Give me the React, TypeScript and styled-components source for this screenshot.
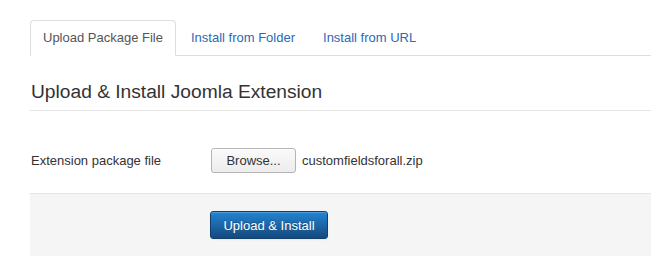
import styled, { createGlobalStyle } from 'styled-components'

const GlobalStyle = createGlobalStyle`
  html, body {
    margin: 0;
    padding: 0;
    background: #fff;
  }
  body {
    font-family: "Liberation Sans", Arial, Helvetica, sans-serif;
    font-size: 13px;
    line-height: 18px;
    color: #333;
  }
`;

const Page = styled.div`
  padding: 20px 0 0 30px;
`;

const Tabs = styled.ul`
  display: flex;
  list-style: none;
  margin: 0 0 18px;
  padding: 0;
  border-bottom: 1px solid #ddd;
`;

const Tab = styled.li<{ $active?: boolean }>`
  margin: 0 2px -1px 0;
  padding: 8px 12px;
  line-height: 18px;
  border: 1px solid ${(p) => (p.$active ? '#ddd' : 'transparent')};
  border-bottom-color: transparent;
  border-radius: 4px 4px 0 0;
  background: ${(p) => (p.$active ? '#fff' : 'transparent')};
  color: ${(p) => (p.$active ? '#555' : '#2a69b8')};
  cursor: pointer;
`;

const Legend = styled.div`
  font-size: 19.2px;
  line-height: 36px;
  color: #333;
  padding-left: 1px;
  border-bottom: 1px solid #e5e5e5;
  margin-bottom: 37px;
`;

const ControlGroup = styled.div`
  display: flex;
  align-items: center;
  height: 25px;
  margin-bottom: 20px;
`;

const Label = styled.label`
  width: 180px;
  padding-left: 1px;
  box-sizing: border-box;
  color: #333;
`;

const BrowseButton = styled.button`
  height: 25px;
  width: 85px;
  margin-left: 1px;
  padding: 0;
  font-family: inherit;
  font-size: 13px;
  color: #333;
  border: 1px solid #b4b4b4;
  border-radius: 3px;
  background: linear-gradient(#fafafa, #ececec);
  box-shadow: inset 0 1px 0 #fff;
`;

const FileName = styled.span`
  margin-left: 6px;
  color: #333;
`;

const FormActions = styled.div`
  border-top: 1px solid #e5e5e5;
  background: #f5f5f5;
  padding: 17px 20px 17px 180px;
`;

const PrimaryButton = styled.button`
  height: 28px;
  width: 118px;
  padding: 0;
  font-family: inherit;
  font-size: 13px;
  color: #fff;
  border: 1px solid #12406d;
  border-radius: 3px;
  background: linear-gradient(#2384d3, #15497c);
  box-shadow: inset 0 1px 0 rgba(255, 255, 255, 0.2), 0 1px 2px rgba(0, 0, 0, 0.05);
  text-shadow: 0 -1px 0 rgba(0, 0, 0, 0.25);
`;

function App() {
  return (
    <>
      <GlobalStyle />
      <Page>
        <Tabs>
          <Tab $active>Upload Package File</Tab>
          <Tab>Install from Folder</Tab>
          <Tab>Install from URL</Tab>
        </Tabs>
        <Legend>Upload &amp; Install Joomla Extension</Legend>
        <ControlGroup>
          <Label>Extension package file</Label>
          <BrowseButton>Browse...</BrowseButton>
          <FileName>customfieldsforall.zip</FileName>
        </ControlGroup>
        <FormActions>
          <PrimaryButton>Upload &amp; Install</PrimaryButton>
        </FormActions>
      </Page>
    </>
  )
}

export default App
